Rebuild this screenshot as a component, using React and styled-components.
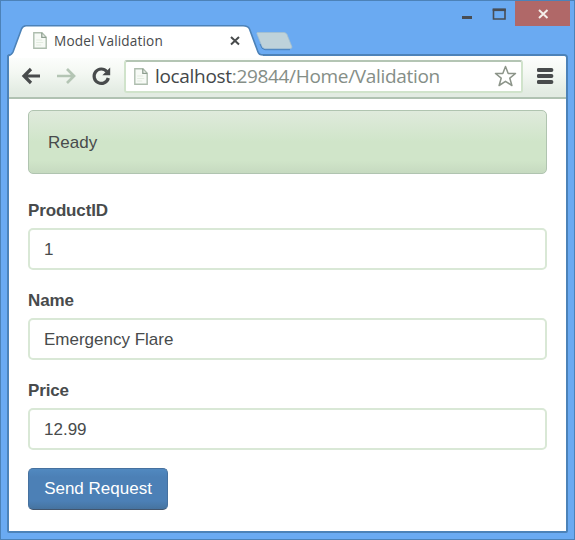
import React from 'react';
import styled, { createGlobalStyle } from 'styled-components';

const Global = createGlobalStyle`
  * { box-sizing: border-box; }
  html, body { margin: 0; padding: 0; background: #6aaaf2; }
`;

const Window = styled.div`
  width: 575px;
  height: 540px;
  display: flex;
  flex-direction: column;
  padding: 0 6px 6px;
  background: #6aaaf2;
  border: 1px solid #4c82b8;
  overflow: hidden;
`;

const TitleBar = styled.header`
  position: relative;
  flex: none;
  height: 53px;
  padding-top: 24px;
`;

const Controls = styled.div`
  position: absolute;
  top: 0;
  right: -2px;
  display: flex;
  height: 25px;
`;

const ControlButton = styled.button`
  width: ${(p) => p.$width}px;
  height: 25px;
  padding: 0;
  border: 0;
  background: ${(p) => (p.$danger ? '#b06868' : 'transparent')};
  svg { display: block; }
`;

const Tab = styled.div`
  position: relative;
  z-index: 1;
  display: flex;
  align-items: center;
  width: 290px;
  height: 32px;
  padding: 0 0 1px 26px;
`;

const TabShape = styled.svg`
  position: absolute;
  z-index: -1;
  left: 0;
  top: 0;
`;

const TabTitle = styled.span`
  width: 175px;
  margin-left: 7px;
  font: 13.6px/20px 'Open Sans', sans-serif;
  letter-spacing: 0.15px;
  color: #484a4c;
  white-space: nowrap;
`;

const Frame = styled.div`
  flex: 1;
  display: flex;
  flex-direction: column;
  border: 2px solid #4c82b8;
  border-radius: 3px 4px 2px 2px;
  background: #fff;
`;

const Toolbar = styled.nav`
  flex: none;
  display: flex;
  align-items: center;
  height: 43px;
  padding: 0 11px 1px 12px;
  border-bottom: 2px solid #b0c2b2;
  background: linear-gradient(#fdfefd, #f4f8f3 40%, #e2ebe2 90%);
  border-radius: 1px 3px 0 0;
`;

const NavIcons = styled.div`
  display: flex;
  gap: 15px;
  width: 103px;
  svg { display: block; }
`;

const AddressBar = styled.div`
  display: flex;
  align-items: center;
  width: 399px;
  height: 33px;
  padding: 0 4px 0 8px;
  border: 2px solid #d0e3cb;
  border-top-color: #b4c5b4;
  border-radius: 3px;
  background: #fff;
`;

const Url = styled.span`
  flex: 1;
  margin-left: 7px;
  font: 19px/28px 'Open Sans', sans-serif;
  letter-spacing: -0.32px;
  color: #858e87;
  white-space: nowrap;
  b { font-weight: 400; color: #444749; }
`;

const MenuIcon = styled.svg`
  display: block;
  margin-left: 14px;
`;

const Page = styled.main`
  flex: 1;
  padding: 11px 19px 0;
  font: 17px/24px 'Liberation Sans', Arial, sans-serif;
  color: #484b4c;
`;

const Alert = styled.div`
  height: 64px;
  padding: 20px 19px;
  border: 1px solid #b0c4b0;
  border-radius: 5px;
  background: linear-gradient(#dfeadc, #d0e5c9 50%, #d0e5c9 80%, #c6dac0);
`;

const Form = styled.form`
  padding-top: 24px;
`;

const Field = styled.div`
  height: 90px;
`;

const Label = styled.label`
  display: block;
  height: 30px;
  line-height: 26px;
  font-weight: 700;
  letter-spacing: -0.15px;
`;

const Input = styled.input`
  display: block;
  width: 100%;
  height: 42px;
  padding: 2px 14px 0;
  border: 2px solid #d9e8d6;
  border-radius: 5px;
  outline: none;
  background: #fff;
  color: inherit;
  font: inherit;
`;

const Submit = styled.button`
  display: block;
  width: 140px;
  height: 42px;
  padding: 0;
  border: 1px solid #46719f;
  border-bottom-color: #42566e;
  border-radius: 5px;
  background: linear-gradient(#5189c0, #4c80b6 20%, #4c80b6 80%, #46739f);
  color: #fff;
  font: inherit;
`;

const DocIcon = () => (
  <svg width="14" height="17" viewBox="0 0 14 17" fill="none">
    <path d="M.8.8h8.1l4.3 4.4v11H.8z" fill="#f7faf6" stroke="#aebdae" strokeWidth="1.4" />
    <path d="M8.8.8v4.5h4.4" stroke="#8e9e90" strokeWidth="1.3" />
    <path d="M3.2 8h6M3.2 10.5h7M3.2 13h5" stroke="#e2ebdf" />
  </svg>
);

const fields = [
  { label: 'ProductID', value: '1' },
  { label: 'Name', value: 'Emergency Flare' },
  { label: 'Price', value: '12.99' },
];

export default function App() {
  return (
    <>
      <Global />
      <Window>
        <TitleBar>
          <Controls>
            <ControlButton $width={31} aria-label="Minimize">
              <svg width="31" height="25"><path d="M6 16.5h10" stroke="#484d54" strokeWidth="3" /></svg>
            </ControlButton>
            <ControlButton $width={28} aria-label="Maximize">
              <svg width="28" height="25"><path d="M6.500 8.500h11.500v9.500H6.500z" stroke="#484d54" strokeWidth="1.6" fill="none" /><path d="M5.700 8.800h13.100" stroke="#484d54" strokeWidth="2.6" /></svg>
            </ControlButton>
            <ControlButton $width={55} $danger aria-label="Close">
              <svg width="55" height="25"><path d="M24 9l8.5 8M32.500 9L24 17" stroke="#f5eeea" strokeWidth="2" /></svg>
            </ControlButton>
          </Controls>
          <Tab>
            <TabShape width="292" height="33" viewBox="0 0 292 33">
              <path d="M2 33V31.500Q5 29.500 6 27L14.500 4Q16 .8 19 .8H236Q241 .8 242.500 4L251 27Q252 30 256 30V33z" fill="#fff" />
              <path d="M1 33V31Q5 29.500 6 27L14.500 4Q16 .8 19 .8H236Q241 .8 242.500 4L251 27Q252 30 256 30" fill="none" stroke="#4c82b8" strokeWidth="1.6" />
              <path d="M250.500 7.500H277Q279 7.500 280 9.500L285 22Q285 23.500 283 23.500H258Q256 23.500 255 21.500L250 9Q249.500 7.500 250.500 7.500z" fill="#bed2da" stroke="#a4bfce" strokeWidth=".8" />
              <path d="M253 19Q254.500 24.700 258 24.700H283" fill="none" stroke="#4c82b8" strokeWidth="1" />
            </TabShape>
            <DocIcon />
            <TabTitle>Model Validation</TabTitle>
            <svg width="30" height="12" viewBox="0 0 30 12"><path d="M2 2l8 7.500M10 2l-8 7.500" stroke="#484b4c" strokeWidth="2" /></svg>
          </Tab>
        </TitleBar>
        <Frame>
          <Toolbar>
            <NavIcons>
              <svg width="20" height="20" viewBox="0 0 20 20" fill="none" stroke="#484b4c" strokeWidth="3.2"><path d="M19 10H4M10 3l-7 7 7 7" /></svg>
              <svg width="20" height="20" viewBox="0 0 20 20" fill="none" stroke="#b4c5b4" strokeWidth="2.700"><path d="M1 10h16M11 3l7 7-7 7" /></svg>
              <svg width="20" height="20" viewBox="0 0 20 20" fill="none"><path d="M15.800 5.500A7.200 7.200 0 1 0 17.300 12" stroke="#484b4c" strokeWidth="3.200" /><path d="M19.200 1.500v7.800h-7.800z" fill="#484b4c" /></svg>
            </NavIcons>
            <AddressBar>
              <DocIcon />
              <Url><b>localhost</b>:29844/Home/Validation</Url>
              <svg width="23" height="23" viewBox="0 0 23 23"><path d="M11.500 1.500l2.700 7h7.300l-5.700 4.700 2.100 7.300-6.400-4.200-6.400 4.200 2.100-7.300L1.500 8.500h7.300z" fill="#fff" stroke="#8c9489" strokeWidth="1.500" strokeLinejoin="round" /></svg>
            </AddressBar>
            <MenuIcon width="18" height="18" viewBox="0 0 18 18"><path d="M1.500 3h13M1.500 9h13M1.500 15h13" stroke="#484b4c" strokeWidth="3.800" strokeLinecap="round" /></MenuIcon>
          </Toolbar>
          <Page>
            <Alert>Ready</Alert>
            <Form onSubmit={(e) => e.preventDefault()}>
              {fields.map(({ label, value }) => (
                <Field key={label}>
                  <Label htmlFor={label}>{label}</Label>
                  <Input id={label} defaultValue={value} />
                </Field>
              ))}
              <Submit type="submit">Send Request</Submit>
            </Form>
          </Page>
        </Frame>
      </Window>
    </>
  );
}
